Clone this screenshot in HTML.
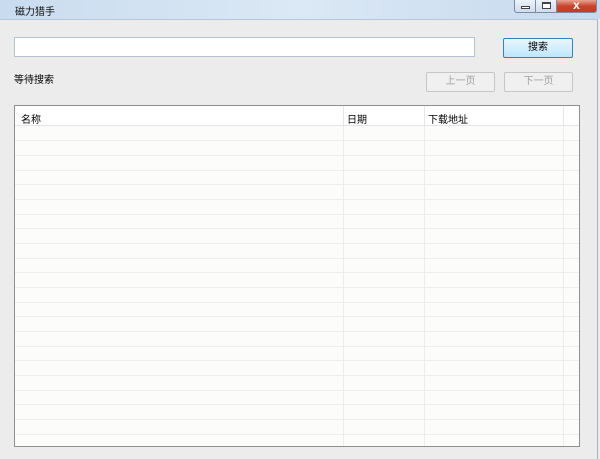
<!DOCTYPE html>
<html><head><meta charset="utf-8"><style>
*{margin:0;padding:0;box-sizing:border-box}
body{width:600px;height:459px;overflow:hidden;background:#ececec;font-family:"Liberation Sans","Noto Sans CJK SC",sans-serif;font-size:10px;color:#000;position:relative}
.title{position:absolute;left:0;top:0;width:600px;height:19px;background:linear-gradient(to right,#c9dcef,#dbe8f5 50%,#c6d9ee);}
.title span{position:absolute;left:15px;top:3px;font-size:10px;color:#111}
.wb{position:absolute;top:0;height:13px;border:1px solid #7b8ba3;border-top:none;background:linear-gradient(#eef3f9,#cfdcec)}
.frame{position:absolute;left:0;top:19px;width:598px;height:440px;background:#ececec;border-top:1px solid #b9c6d4;border-right:1px solid #a9b4c0}
input{position:absolute;left:14px;top:37px;width:461px;height:20px;border:1px solid #b4c2d2;background:#fff}
.btn{position:absolute;height:20px;border:1px solid #707070;border-radius:2px;background:linear-gradient(#f2f2f2,#dcdcdc);text-align:center;line-height:18px;font-size:10px}
.dis{border-color:#c6c6c6;color:#a0a0a0;background:#f0f0f0}
.tbl{position:absolute;left:14px;top:105px;width:566px;height:342px;border:1px solid #8e8f8f;background:#fcfdfb;overflow:hidden}
.hdr{position:absolute;left:0;top:0;width:100%;height:20px;background:#fff;border-bottom:1px solid #e5e5e5}
.hdr span{position:absolute;top:5px}
.vl{position:absolute;top:0;bottom:0;width:1px;background:#ececec}
.hl{position:absolute;left:0;right:0;height:1px;background:#ededed}
</style></head><body>
<div class="title"><span>磁力猎手</span></div>
<div class="wb" style="left:514px;width:22px;border-radius:0 0 0 3px"><div style="position:absolute;left:6px;top:6px;width:9px;height:3px;border:1px solid #444;background:#fff"></div></div>
<div class="wb" style="left:535px;width:22px"><div style="position:absolute;left:6px;top:2px;width:9px;height:7px;border:1px solid #444;border-top-width:2px;background:#fff"></div></div>
<div class="wb" style="left:556px;width:41px;border-radius:0 0 3px 0;background:linear-gradient(#e8a493,#c9452c 50%,#c43b22)"><div style="position:absolute;left:0;width:100%;top:-2px;text-align:center;color:#fff;font-weight:bold;font-size:12px">x</div></div>
<div class="frame"></div>
<input type="text">
<div class="btn" style="left:503px;top:38px;width:70px;border-color:#3c7fb1;background:linear-gradient(#eaf6fd,#bee6fd)">搜索</div>
<div style="position:absolute;left:14px;top:71px">等待搜索</div>
<div class="btn dis" style="left:426px;top:72px;width:69px">上一页</div>
<div class="btn dis" style="left:504px;top:72px;width:69px">下一页</div>
<div class="tbl">
<div class="vl" style="left:328px"></div><div class="vl" style="left:409px"></div><div class="vl" style="left:548px"></div>
<div class="hdr"><span style="left:6px">名称</span><span style="left:332px">日期</span><span style="left:413px">下载地址</span>
<div class="vl" style="left:328px;background:#e5e5e5"></div><div class="vl" style="left:409px;background:#e5e5e5"></div><div class="vl" style="left:548px;background:#e5e5e5"></div></div>
<div class="hl" style="top:34px"></div><div class="hl" style="top:49px"></div><div class="hl" style="top:64px"></div><div class="hl" style="top:78px"></div><div class="hl" style="top:93px"></div><div class="hl" style="top:108px"></div><div class="hl" style="top:122px"></div><div class="hl" style="top:137px"></div><div class="hl" style="top:152px"></div><div class="hl" style="top:166px"></div><div class="hl" style="top:181px"></div><div class="hl" style="top:196px"></div><div class="hl" style="top:210px"></div><div class="hl" style="top:225px"></div><div class="hl" style="top:240px"></div><div class="hl" style="top:254px"></div><div class="hl" style="top:269px"></div><div class="hl" style="top:284px"></div><div class="hl" style="top:298px"></div><div class="hl" style="top:313px"></div><div class="hl" style="top:328px"></div>
</div>
</body></html>
